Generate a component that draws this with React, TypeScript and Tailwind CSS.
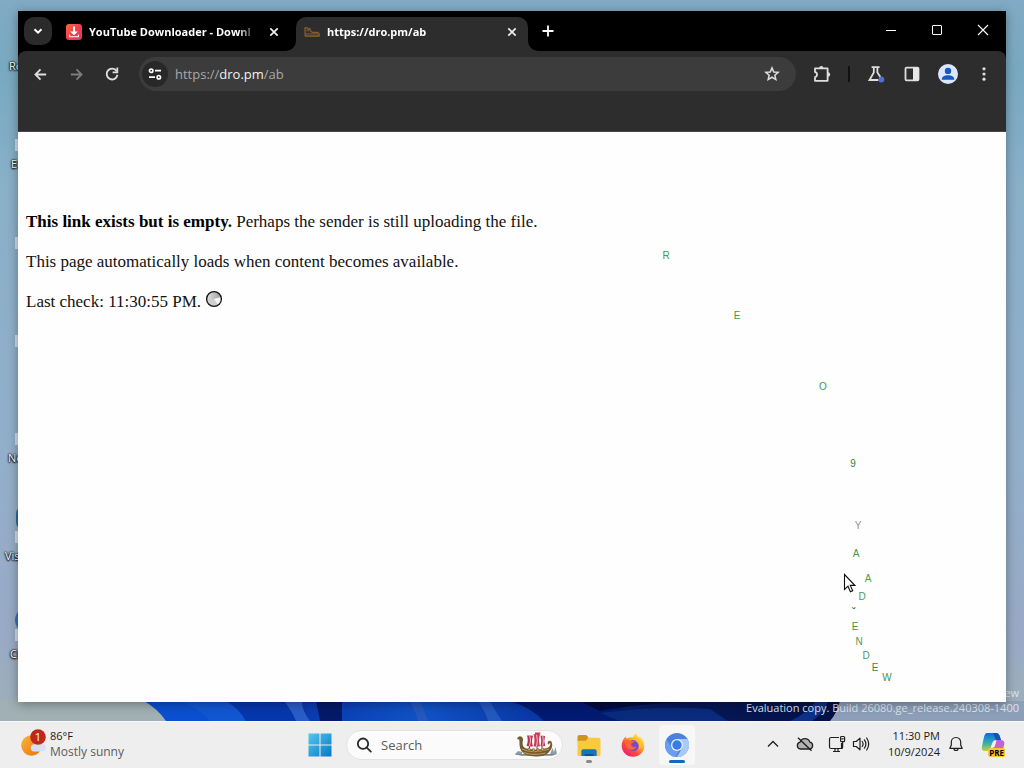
import React from 'react';

type IconProps = { className?: string };

function ChevronDown({ className = '' }: IconProps) {
  return (
    <svg viewBox="0 0 12 12" className={className} fill="none" stroke="currentColor" strokeWidth="2">
      <path d="M2.5 4.2 6 7.7l3.5-3.5" />
    </svg>
  );
}

function Cross({ className = '', thin = false }: IconProps & { thin?: boolean }) {
  return (
    <svg viewBox="0 0 12 12" className={className} fill="none" stroke="currentColor" strokeWidth={thin ? 1.1 : 1.8}>
      {thin ? <path d="M1 1l10 10M11 1 1 11" /> : <path d="M2.3 2.3l7.4 7.4M9.7 2.3 2.3 9.7" />}
    </svg>
  );
}

function ArrowLeft({ className = '' }: IconProps) {
  return (
    <svg viewBox="0 0 16 16" className={className} fill="none" stroke="currentColor" strokeWidth="1.9">
      <path d="M14 8H3M8 2.6 2.6 8 8 13.4" />
    </svg>
  );
}

function Reload({ className = '' }: IconProps) {
  return (
    <svg viewBox="0 0 16 16" className={className}>
      <path d="M12.6 5.1A5.4 5.4 0 1 0 13.4 8.9" fill="none" stroke="currentColor" strokeWidth="1.9" />
      <path d="M14.2 1.6v5.6H8.6V5.4h3.8V1.6z" fill="currentColor" />
    </svg>
  );
}

function Tune({ className = '' }: IconProps) {
  return (
    <svg viewBox="0 0 14 14" className={className} fill="none" stroke="currentColor" strokeWidth="1.7">
      <circle cx="3.2" cy="3.7" r="1.7" />
      <path d="M7 3.7h6M1 10.2h6" />
      <circle cx="10.8" cy="10.2" r="1.7" />
    </svg>
  );
}

function Star({ className = '' }: IconProps) {
  return (
    <svg viewBox="0 0 16 16" className={className} fill="none" stroke="currentColor" strokeWidth="1.5" strokeLinejoin="miter">
      <path d="M8 1.9l1.75 4.05 4.4.4-3.33 2.9 1 4.3L8 11.25l-3.82 2.3 1-4.3-3.33-2.9 4.4-.4z" />
    </svg>
  );
}

function Puzzle({ className = '' }: IconProps) {
  return (
    <svg viewBox="0 0 18 18" className={className}>
      <path
        d="M2 3.4h12.6v12.4H2v-3.6c2.700-.6 2.700-4.600 0-5.200z"
        fill="none"
        stroke="currentColor"
        strokeWidth="1.8"
        strokeLinejoin="round"
      />
      <path d="M6.200 3a2.100 2.100 0 0 1 4.200 0zM15 7.300a2.200 2.200 0 0 1 0 4.400z" fill="currentColor" />
    </svg>
  );
}

function Flask({ className = '' }: IconProps) {
  return (
    <svg viewBox="0 0 18 18" className={className}>
      <path d="M4.6 2.2h8M6.8 2.5v5L2.5 15h9M10.4 2.5v5l3 4.6" fill="none" stroke="#dedede" strokeWidth="1.8" />
      <circle cx="14.3" cy="14.6" r="3" fill="#4b72cf" />
    </svg>
  );
}

function SidePanel({ className = '' }: IconProps) {
  return (
    <svg viewBox="0 0 16 16" className={className}>
      <rect x="1.5" y="1.7" width="13" height="12.6" rx="1" fill="none" stroke="#dedede" strokeWidth="1.8" />
      <path d="M9 1.7h5.5v12.6H9z" fill="#e8e8e8" />
    </svg>
  );
}

function Profile({ className = '' }: IconProps) {
  return (
    <svg viewBox="0 0 20 20" className={className}>
      <circle cx="10" cy="10" r="10" fill="#dbe7fc" />
      <circle cx="10" cy="6.9" r="3.2" fill="#1757c6" />
      <path d="M3.8 15.3c0-2.8 3-4.1 6.2-4.1s6.2 1.3 6.2 4.1v.5H3.8z" fill="#1757c6" />
    </svg>
  );
}

function MoreDots({ className = '' }: IconProps) {
  return (
    <svg viewBox="0 0 16 16" className={className} fill="currentColor">
      <circle cx="8" cy="2.8" r="1.6" />
      <circle cx="8" cy="8" r="1.6" />
      <circle cx="8" cy="13.2" r="1.6" />
    </svg>
  );
}

function DownloaderIcon({ className = '' }: IconProps) {
  return (
    <svg viewBox="0 0 16 16" className={className}>
      <defs>
        <linearGradient id="dl" x1="0" y1="0" x2="1" y2="1">
          <stop offset="0" stopColor="#fb6a3c" />
          <stop offset="0.5" stopColor="#f43d4c" />
          <stop offset="1" stopColor="#ee2b75" />
        </linearGradient>
      </defs>
      <rect width="16" height="16" rx="3" fill="url(#dl)" />
      <path d="M7 2.5h2v5h3L8 11.3 4 7.5h3z" fill="#fff" />
      <path d="M3.6 10.5v2.2h8.8v-2.2" fill="none" stroke="#fff" strokeWidth="1.1" />
    </svg>
  );
}

function ShoeIcon({ className = '' }: IconProps) {
  return (
    <svg viewBox="0 0 16 12" className={className} fill="none" stroke="#85602d" strokeWidth="1.3">
      <path d="M1 1.8h2.2l1 1.6 1.4-1 1.6 3.4 2.4.7h4.2l1.4 1.6v1.8H1.2z" />
      <path d="M1 7.8h14M2.5 4.5h2.8M1.4 10.4h13.8" stroke="#76552a" />
    </svg>
  );
}

function Pie({ className = '' }: IconProps) {
  return (
    <svg viewBox="0 0 18 18" className={className}>
      <defs>
        <linearGradient id="pie" x1="0" y1="0" x2="1" y2="0">
          <stop offset="0" stopColor="#e2e2e2" />
          <stop offset="1" stopColor="#9c9c9c" />
        </linearGradient>
      </defs>
      <circle cx="9" cy="9" r="7.400" fill="#cfcfcf" />
      <path d="M9 9H1.600a7.400 7.400 0 0 1 14.500-2z" fill="url(#pie)" />
      <path d="M9 9l7.200-2a7.400 7.400 0 0 1-2.800 7.900z" fill="#f6f6f6" />
      <circle cx="9" cy="9" r="7.400" fill="none" stroke="#111" strokeWidth="1.300" />
    </svg>
  );
}

function Weather({ className = '' }: IconProps) {
  return (
    <svg viewBox="0 0 28 30" className={className}>
      <defs>
        <linearGradient id="sun" x1="0" y1="0" x2="1" y2="1">
          <stop offset="0" stopColor="#fbb63a" />
          <stop offset="1" stopColor="#e8700d" />
        </linearGradient>
      </defs>
      <circle cx="11.5" cy="16.500" r="10.3" fill="url(#sun)" />
      <path d="M14 22.500a3.7 3.7 0 0 1-.2-7.3 4.3 4.3 0 0 1 7.8-.8 4 4 0 0 1 1 7.9c-1 .3-7.2.3-8.6.2z" fill="#d6e0f5" />
      <circle cx="18" cy="8" r="7.8" fill="#bd2a1c" />
    </svg>
  );
}

function WindowsLogo({ className = '' }: IconProps) {
  return (
    <svg viewBox="0 0 24 24" className={className}>
      <defs>
        <linearGradient id="win" x1="0" y1="0" x2="1" y2="1">
          <stop offset="0" stopColor="#52c8ef" />
          <stop offset="1" stopColor="#0877c9" />
        </linearGradient>
      </defs>
      <path d="M.5.5h11v11H.5zM12.5.5h11v11h-11zM.5 12.5h11v11H.5zM12.5 12.5h11v11h-11z" fill="url(#win)" />
    </svg>
  );
}

function Magnifier({ className = '' }: IconProps) {
  return (
    <svg viewBox="0 0 16 16" className={className} fill="none" stroke="#2a2a2a" strokeWidth="1.8" strokeLinecap="round">
      <circle cx="7" cy="6.7" r="5.2" />
      <path d="M10.8 10.6l4 4" />
    </svg>
  );
}

function VikingShip({ className = '' }: IconProps) {
  return (
    <svg viewBox="0 0 44 26" className={className}>
      <path d="M1 22l3-3 4 1v3H2zM36 22l2.500-6 1.500 4 1.500-5 1.500 7z" fill="#8f9ea3" />
      <path d="M1 22h42l-5 1.800H7z" fill="#778a91" />
      <path d="M23 1v17M15.500 4v12M28 4v12" stroke="#71502b" strokeWidth="1" />
      <path d="M13 3.500q4-.2 6 .2-2 5.500 0 10.500-4 .8-6.500-.4 2.200-5 .5-10.300z" fill="#b8304f" />
      <path d="M19.500 2.300q4-.8 6.500 0-2 6 0 12-4 .8-6.500 0 2-6 0-12z" fill="#c73a58" />
      <path d="M26.500 3.800q3-.4 4.500.2-1.500 5 .2 9.800-2 1-4.700.2 1.800-5 0-10.200z" fill="#b8304f" />
      <path d="M15.800 3.800q1.500 5-.3 10.300M22.600 2.500q1.500 6 0 12M28.800 4q1 5 0 9.800" stroke="#f2ccd2" strokeWidth="1" fill="none" />
      <path d="M21 .6h6l-1.400 1L27 2.600h-6z" fill="#db3345" />
      <path d="M3 7q1-3.500 4.200-2.500Q10 6 8.600 10q-.6 5 3.400 6.500 11 2.500 21-.5 3.800-1.500 3.300-5-1.800.5-1.800 1.700-1.500-1.200-.6-3 1.800-1.700 3.500-.2 2.400 5-1.600 9.500-2.800 4.500-9.800 5.300-9 .7-14-1.300-6-3-6.500-10 .1-3.500-.3-5.500z" fill="#765b31" />
      <path d="M8 17q11 5.500 27 0M9.500 20.500q10 3.500 22 .5" stroke="#c49b56" strokeWidth="1" fill="none" />
      <g fill="#d4ac62" stroke="#583c21" strokeWidth=".5">
        <circle cx="15" cy="17.500" r="1.400" />
        <circle cx="19.500" cy="18" r="1.400" />
        <circle cx="24" cy="18" r="1.400" />
        <circle cx="28.500" cy="17.500" r="1.400" />
      </g>
    </svg>
  );
}

function Folder({ className = '' }: IconProps) {
  return (
    <svg viewBox="0 0 26 24" className={className}>
      <path d="M1 3q0-2 2-2h7l2.500 2.500L10 8H1z" fill="#cf941b" />
      <path d="M1 7h8.500l3-3H23q2 0 2 2v15q0 2-2 2H3q-2 0-2-2z" fill="#fbc93d" />
      <path d="M5 23v-5q0-2 2-2h12q2 0 2 2v5z" fill="#1673bc" />
      <path d="M8.500 23v-2h9v2z" fill="#0c4f93" />
    </svg>
  );
}

function Firefox({ className = '' }: IconProps) {
  return (
    <svg viewBox="0 0 24 24" className={className}>
      <defs>
        <linearGradient id="fx" x1=".9" y1=".1" x2=".2" y2="1">
          <stop offset="0" stopColor="#fff14a" />
          <stop offset=".35" stopColor="#ffae2b" />
          <stop offset=".65" stopColor="#ff4b3c" />
          <stop offset="1" stopColor="#e31c76" />
        </linearGradient>
      </defs>
      <path d="M4.500 3.500c.3 1 .7 1.600 1.300 2.100C8 4.300 10 4.200 12 4.500c.5-1.800 1.500-3.200 3.200-4.200.4 2.300 2 3.200 3.600 4.800 0-.7-.2-1.200-.5-1.900 3.300 2.300 5.100 5.600 5.100 9.500C23.400 19 18.300 23.700 12 23.700S.7 18.900.7 12.700c0-3.400 1.500-6.700 3.800-9.200z" fill="url(#fx)" />
      <circle cx="12.300" cy="12.600" r="5.500" fill="#7847d6" />
      <path d="M4.800 7.500c2-.8 4-.5 5.400.7h3.300c-.2 1.500-3 1.800-3.200 2.400-.7 3 2.200 4.200 5 2.900-.7 2.600-3.500 3.900-6.100 3-3.500-1.200-5.300-5.100-4.400-9z" fill="#ff6636" />
      <path d="M12 7.200c2.500-.4 4.700 1 5.700 3.300.6-2.300-.5-4.700-2.400-6 2.800.7 5 3.700 5 7.100 0 1.900-.7 3.800-1.900 5.300.5-4.500-1-8.400-6.400-9.700z" fill="#ffc130" opacity=".85" />
    </svg>
  );
}

function Chromium({ className = '' }: IconProps) {
  return (
    <svg viewBox="0 0 24 24" className={className}>
      <circle cx="12" cy="12" r="12" fill="#4a83df" />
      <path d="M12 6h10.400A12 12 0 0 1 12 24l5.200-9z" fill="#a9c9f8" />
      <path d="M1.600 6 6.800 15l6.900 3-3.300 5.900A12 12 0 0 1 1.600 6z" fill="#6b9df0" />
      <circle cx="12" cy="12" r="6" fill="#e9f1ff" />
      <circle cx="12" cy="12" r="4.700" fill="#387be3" />
    </svg>
  );
}

function CloudOff({ className = '' }: IconProps) {
  return (
    <svg viewBox="0 0 18 16" className={className} fill="#b3b3b3" stroke="#202020" strokeWidth="1.300">
      <path d="M4.500 13a3.500 3.500 0 0 1-.4-6.900 5.200 5.200 0 0 1 9.800 0 3.500 3.500 0 0 1-.4 6.900z" />
      <path d="M2 1.800 15.500 14.800" strokeWidth="1.400" />
    </svg>
  );
}

function Network({ className = '' }: IconProps) {
  return (
    <svg viewBox="0 0 18 18" className={className} fill="none" stroke="#202020" strokeWidth="1.200">
      <path d="M11 2.500H3q-1.500 0-1.500 1.500v8q0 1.500 1.500 1.500h10.500V8M5 16.500h7M7 13.500v3M10 13.500v3" />
      <rect x="12.600" y="1.500" width="4" height="5.200" rx="1" />
      <path d="M14.600 6.700v5.800q0 1-1 1M13.500 3.800h2.200" />
    </svg>
  );
}

function Speaker({ className = '' }: IconProps) {
  return (
    <svg viewBox="0 0 18 18" className={className} fill="none" stroke="#202020" strokeWidth="1.200" strokeLinejoin="round" strokeLinecap="round">
      <path d="M1.500 6.500v5h2.700l3.800 3.300V3.200L4.200 6.500z" />
      <path d="M10.200 6.500q1.800 2.500 0 5M12.400 4.800q3 4.200 0 8.400M14.700 3q4 6 0 12" />
    </svg>
  );
}

function Bell({ className = '' }: IconProps) {
  return (
    <svg viewBox="0 0 16 16" className={className} fill="none" stroke="#202020" strokeWidth="1.200" strokeLinejoin="round">
      <path d="M8 1.500c-3 0-4.700 2.200-4.700 4.800v3L1.800 12.300h12.400l-1.500-3v-3C12.700 3.700 11 1.500 8 1.500zM6 12.500a2 2 0 0 0 4 0" />
    </svg>
  );
}

function Copilot({ className = '' }: IconProps) {
  return (
    <svg viewBox="0 0 24 24" className={className}>
      <defs>
        <linearGradient id="cpa" x1="0" y1="0" x2="0" y2="1">
          <stop offset="0" stopColor="#1768d6" />
          <stop offset=".5" stopColor="#24aabd" />
          <stop offset="1" stopColor="#c4cf39" />
        </linearGradient>
        <linearGradient id="cpb" x1="0" y1="0" x2="0" y2="1">
          <stop offset="0" stopColor="#a568ee" />
          <stop offset=".6" stopColor="#ed5ba5" />
          <stop offset="1" stopColor="#f79a50" />
        </linearGradient>
      </defs>
      <path d="M6 1h9q3 0 4 4l1 3h-5q-3 0-4 4l-1.500 4Q8.500 19 6 19H3.500Q0 19 1 14l2-9q1-4 3-4z" fill="url(#cpa)" />
      <path d="M13 8h6q5 0 4.300 4l-1.600 7Q21 23 17 23H9q2.500-1 3-4z" fill="url(#cpb)" />
      <path d="M12 1h3q3 0 4 4l1 3h-5z" fill="#1253b5" />
      <path d="M13 8.500h2.600L13.500 15H10z" fill="#f4f1fb" />
    </svg>
  );
}

function Tab({ icon, title, active = false }: { icon: React.ReactNode; title: string; active?: boolean }) {
  return (
    <div
      className={
        active
          ? 'relative flex h-[34px] w-[232px] items-center rounded-t-[10px] bg-[#2d2d2d] pb-1 pr-2 pl-2'
          : 'relative flex h-[34px] w-[238px] items-center pb-1 pr-[14px] pl-2'
      }
    >
      {active && (
        <>
          <svg viewBox="0 0 10 10" className="absolute bottom-0 -left-[10px] size-[10px]" fill="#2d2d2d">
            <path d="M10 0v10H0A10 10 0 0 0 10 0z" />
          </svg>
          <svg viewBox="0 0 10 10" className="absolute -right-[10px] bottom-0 size-[10px]" fill="#2d2d2d">
            <path d="M0 0v10h10A10 10 0 0 1 0 0z" />
          </svg>
        </>
      )}
      {icon}
      <span className="ml-[7px] flex-1 overflow-hidden text-[11px] leading-4 font-bold whitespace-nowrap text-white [mask-image:linear-gradient(to_right,black_calc(100%-18px),transparent)]">
        {title}
      </span>
      <button aria-label={`Close ${title}`} className="ml-[10px] flex size-4 items-center justify-center text-[#ececec]">
        <Cross className="size-3" />
      </button>
    </div>
  );
}

const letters: { ch: string; pos: string }[] = [
  { ch: 'R', pos: 'left-[648px] top-[124px] text-[#3c9a43]' },
  { ch: 'E', pos: 'left-[719px] top-[184px] text-[#3c9a43]' },
  { ch: 'O', pos: 'left-[805px] top-[255px] text-[#3c9a43]' },
  { ch: '9', pos: 'left-[835px] top-[332px] text-[#33803a]' },
  { ch: 'Y', pos: 'left-[840px] top-[394px] text-[#8b938b]' },
  { ch: 'A', pos: 'left-[838px] top-[422px] text-[#3c9a43]' },
  { ch: 'A', pos: 'left-[850px] top-[447px] text-[#4f9955]' },
  { ch: 'D', pos: 'left-[844px] top-[465px] text-[#4f9955]' },
  { ch: '˘', pos: 'left-[836px] top-[480px] font-bold text-[#33803a]' },
  { ch: 'E', pos: 'left-[837px] top-[495px] text-[#3c9a43]' },
  { ch: 'N', pos: 'left-[841px] top-[510px] text-[#4f9955]' },
  { ch: 'D', pos: 'left-[848px] top-[524px] text-[#4f9955]' },
  { ch: 'E', pos: 'left-[857px] top-[536px] text-[#3c8a43]' },
  { ch: 'W', pos: 'left-[869px] top-[546px] text-[#4f8f55]' },
];

const shortcuts: { label: string; pos: string }[] = [
  { label: 'Recycle Bin', pos: 'top-[58px] left-[9px]' },
  { label: 'Edge', pos: 'top-[156px] left-[11px]' },
  { label: 'Notepad', pos: 'top-[450px] left-[8px]' },
  { label: 'Visual Studio', pos: 'top-[548px] left-[5px]' },
  { label: 'Chromium', pos: 'top-[646px] left-[10px]' },
];

const shortcutArrows = ['top-[139px]', 'top-[237px]', 'top-[335px]', 'top-[433px]', 'top-[531px]', 'top-[629px]'];

function Desktop() {
  return (
    <div className="absolute inset-0 overflow-hidden bg-[linear-gradient(to_bottom,#82a9c5_0%,#78a9c0_10%,#89afc9_25%,#92afca_60%,#98aac6_88%,#9fb0b7_100%)]">
      <svg viewBox="0 0 1024 20" preserveAspectRatio="none" className="absolute inset-x-0 bottom-0 h-5 w-full">
        <defs>
          <linearGradient id="bloom" x1="0" x2="1">
            <stop offset="0" stopColor="#0b4fcf" />
            <stop offset=".1" stopColor="#0a4fd0" />
            <stop offset=".18" stopColor="#06268a" />
            <stop offset=".24" stopColor="#0a3bb0" />
            <stop offset=".4" stopColor="#1052c6" />
            <stop offset=".55" stopColor="#0a3aa8" />
            <stop offset=".72" stopColor="#061b5e" />
            <stop offset="1" stopColor="#041044" />
          </linearGradient>
        </defs>
        <path d="M0 0h150l16 20H0z" fill="#a0b0b4" />
        <path d="M830 0h194v20H825z" fill="#8d9fb8" />
        <path d="M144 0h696q-3 12-10 20H166Q158 8 144 0z" fill="url(#bloom)" />
        <path d="M180 0q18 6 30 20h36q-8-14-20-20z" fill="#1157d2" />
        <path d="M226 0q14 8 20 20h54q-12-14-16-20z" fill="#0637ac" />
        <path d="M284 0q8 10 12 20h14q-8-10-8-20z" fill="#2a5cc8" />
        <path d="M316 0h26v20h-22z" fill="#041a68" />
        <path d="M410 0q6 12 8 20h10l-8-20zM478 0q8 12 10 20h14q-8-12-12-20z" fill="#2458bc" />
        <path d="M510 0q20 6 34 20h116q-40-14-70-20z" fill="#031a72" />
        <path d="M580 0h130q-70 2-110 10z" fill="#020d3f" />
        <path d="M600 12q60-8 110-4l18 12H620z" fill="#0a2a7c" />
        <path d="M790 20q18-8 26-20h12q-4 12-16 20z" fill="#0c3186" />
      </svg>
      {shortcuts.map((s) => (
        <span key={s.label} className={`absolute text-[11px] leading-4 whitespace-nowrap text-white [text-shadow:0_1px_2px_#000,0_0_2px_#000,0_0_2px_#000] ${s.pos}`}>
          {s.label}
        </span>
      ))}
      {shortcutArrows.map((p) => (
        <span key={p} className={`absolute left-[15px] h-3 w-3 bg-[#cfdde7] ${p}`} />
      ))}
      <span className="absolute top-[608px] left-[15px] size-6 rounded-full bg-[#3c6fc0]" />
      <span className="absolute top-[506px] left-[16px] h-6 w-4 rounded-full bg-[#2b6a9c]" />
      <div className="absolute right-[5px] bottom-[6px] text-right text-[11px] leading-[15px] text-[#dfe5ee]">
        <p>Windows 11 Pro Insider Preview</p>
        <p>Evaluation copy. Build 26080.ge_release.240308-1400</p>
      </div>
    </div>
  );
}

function Browser() {
  return (
    <section className="relative flex flex-1 flex-col bg-black shadow-[0_2px_10px_rgba(0,0,0,0.35)]">
      <header className="flex h-10 items-end pl-[6px]">
        <button aria-label="Search tabs" className="mb-[6px] flex size-7 items-center justify-center rounded-[10px] bg-[#2b2b2b] text-white">
          <ChevronDown className="size-3" />
        </button>
        <div className="ml-[6px] flex">
          <Tab icon={<DownloaderIcon className="size-4 shrink-0" />} title="YouTube Downloader - Downl" />
          <Tab icon={<ShoeIcon className="h-3 w-4 shrink-0" />} title="https://dro.pm/ab" active />
        </div>
        <button aria-label="New tab" className="mb-[6px] ml-[6px] flex size-7 items-center justify-center text-white">
          <svg viewBox="0 0 12 12" className="size-3" stroke="currentColor" strokeWidth="1.8">
            <path d="M6 .5v11M.5 6h11" />
          </svg>
        </button>
        <div className="ml-auto flex h-[38px] self-start text-white">
          <button aria-label="Minimize" className="flex w-[46px] items-center justify-center">
            <span className="h-px w-[10px] bg-white" />
          </button>
          <button aria-label="Maximize" className="flex w-[46px] items-center justify-center">
            <span className="size-[10px] rounded-[1px] border border-white" />
          </button>
          <button aria-label="Close" className="flex w-[46px] items-center justify-center">
            <Cross thin className="size-3" />
          </button>
        </div>
      </header>

      <div className="h-[81px] rounded-t-[8px] border-b border-[#48484a] bg-[#2d2d2d]">
        <div className="flex h-[46px] items-center pr-1 text-[#dedede]">
          <div className="flex pl-1">
            <button aria-label="Back" className="flex w-9 items-center justify-center">
              <ArrowLeft className="size-[15px]" />
            </button>
            <button aria-label="Forward" className="flex w-9 items-center justify-center text-[#7d7d7d]">
              <ArrowLeft className="size-[15px] rotate-180" />
            </button>
            <button aria-label="Reload" className="flex w-9 items-center justify-center">
              <Reload className="size-4" />
            </button>
          </div>
          <div className="ml-[9px] flex h-[34px] flex-1 items-center rounded-full bg-[#3c3c3c] pr-4 pl-[3px]">
            <button aria-label="Site information" className="flex size-[26px] items-center justify-center rounded-full bg-[#282828] text-white">
              <Tune className="size-[14px]" />
            </button>
            <a href="#address" aria-label="Address" className="ml-[7px] flex-1 text-[13px] leading-5 text-[#a9a9a9]">
              https://<span className="text-[#f1f1f1]">dro.pm</span>/ab
            </a>
            <button aria-label="Bookmark this page">
              <Star className="size-4" />
            </button>
          </div>
          <div className="flex items-center">
            <button aria-label="Extensions" className="ml-2 flex w-9 items-center justify-center">
              <Puzzle className="size-[18px]" />
            </button>
            <span className="ml-2 h-4 w-[2px] bg-[#111]" />
            <button aria-label="Labs" className="ml-2 flex w-9 items-center justify-center">
              <Flask className="size-[18px]" />
            </button>
            <button aria-label="Side panel" className="flex w-9 items-center justify-center">
              <SidePanel className="size-4" />
            </button>
            <button aria-label="Profile" className="flex w-9 items-center justify-center">
              <Profile className="size-5" />
            </button>
            <button aria-label="Menu" className="flex w-9 items-center justify-center">
              <MoreDots className="size-4" />
            </button>
          </div>
        </div>
      </div>

      <main className='relative flex-1 overflow-hidden bg-[#fefefe] px-2 pt-[78px] font-["Liberation_Serif",serif] text-[17px] leading-6 text-[#111]'>
        <p>
          <strong className="text-black">This link exists but is empty.</strong> Perhaps the sender is still uploading the file.
        </p>
        <p className="mt-4">This page automatically loads when content becomes available.</p>
        <p className="mt-4 flex items-start gap-1">
          Last check: 11:30:55 PM. <Pie className="size-[18px]" />
        </p>
        {letters.map((l, i) => (
          <span
            key={i}
            className={`absolute -translate-x-1/2 -translate-y-1/2 font-["Liberation_Sans",sans-serif] text-[10px] leading-3 ${l.pos}`}
          >
            {l.ch}
          </span>
        ))}
        <svg viewBox="0 0 13 20" className="absolute top-[441px] left-[825px] h-5 w-[13px]">
          <path d="M1.500 1.500v15l3.500-3.300 2.400 5.500 2.300-1-2.400-5.300h4.500z" fill="#fff" stroke="#111" strokeWidth="1.100" />
        </svg>
      </main>
    </section>
  );
}

function Taskbar() {
  return (
    <footer className="relative grid h-[47px] grid-cols-[298fr_auto_325fr] items-center border-t border-[#f8f8f8] bg-[#eeeeee] text-[12px] leading-4 text-[#1b1b1b]">
      <button aria-label="Weather" className="flex items-center pb-[2px] pl-5 text-left text-[12px]">
        <span className="relative">
          <Weather className="h-[30px] w-7" />
          <span className="absolute top-0 left-[10px] w-4 text-center text-[11px] text-white">1</span>
        </span>
        <span className="ml-[2px]">
          <span className="block text-[11px]">86°F</span>
          <span className="block text-[#5c5c5c]">Mostly sunny</span>
        </span>
      </button>
      <nav className="flex items-center">
        <button aria-label="Start" className="flex w-11 justify-center">
          <WindowsLogo className="size-6" />
        </button>
        <label className="mx-1 flex h-[30px] w-[217px] items-center rounded-full border border-[#e2e2e2] bg-[#fbfbfb] pr-1 pl-[9px]">
          <Magnifier className="size-4 shrink-0" />
          <input
            aria-label="Search"
            placeholder="Search"
            className="ml-[9px] w-0 flex-1 bg-transparent text-[13px] outline-none placeholder:text-[#5c5c5c]"
          />
          <VikingShip className="h-[26px] w-11 shrink-0" />
        </label>
        <button aria-label="File Explorer" className="relative flex h-10 w-11 items-center justify-center">
          <Folder className="h-[23px] w-[26px]" />
          <span className="absolute bottom-[2px] h-[3px] w-[6px] rounded-full bg-[#8a8a8a]" />
        </button>
        <button aria-label="Firefox" className="flex h-10 w-11 items-center justify-center">
          <Firefox className="size-6" />
        </button>
        <button aria-label="Chromium" className="relative flex h-10 w-11 items-center justify-center">
          <span className="flex h-10 w-9 items-center justify-center rounded-[4px] bg-[#f7f7f7]">
            <Chromium className="size-6" />
          </span>
          <span className="absolute bottom-[2px] h-[3px] w-4 rounded-full bg-[#1369b8]" />
        </button>
      </nav>
      <div className="flex items-center justify-end pr-[19px] pb-[2px]">
        <button aria-label="Show hidden icons" className="flex w-8 justify-center">
          <svg viewBox="0 0 12 12" className="size-3" fill="none" stroke="#202020" strokeWidth="1.3">
            <path d="M1 8.500l5-5 5 5" />
          </svg>
        </button>
        <button aria-label="OneDrive" className="flex w-8 justify-center">
          <CloudOff className="h-4 w-[18px]" />
        </button>
        <button aria-label="Network and sound" className="flex w-14 justify-center gap-[6px]">
          <Network className="size-[18px]" />
          <Speaker className="size-[18px]" />
        </button>
        <button className="flex w-[63px] flex-col items-end text-[11px] whitespace-nowrap">
          <span>11:30 PM</span>
          <span>10/9/2024</span>
        </button>
        <button aria-label="Notifications" className="ml-2 flex">
          <Bell className="size-4" />
        </button>
        <button aria-label="Copilot" className="relative ml-[17px] flex">
          <Copilot className="size-6" />
          <span className="absolute right-0 -bottom-[1px] rounded-[2px] bg-[#f8c72c] px-[1px] text-[8px] leading-[9px] font-bold text-black">PRE</span>
        </button>
      </div>
    </footer>
  );
}

export default function App() {
  return (
    <div className='flex min-h-screen flex-col font-["Open_Sans","Noto_Sans",sans-serif]'>
      <div className="relative flex flex-1 flex-col px-[18px] pt-[11px] pb-[19px]">
        <Desktop />
        <Browser />
      </div>
      <Taskbar />
    </div>
  );
}
